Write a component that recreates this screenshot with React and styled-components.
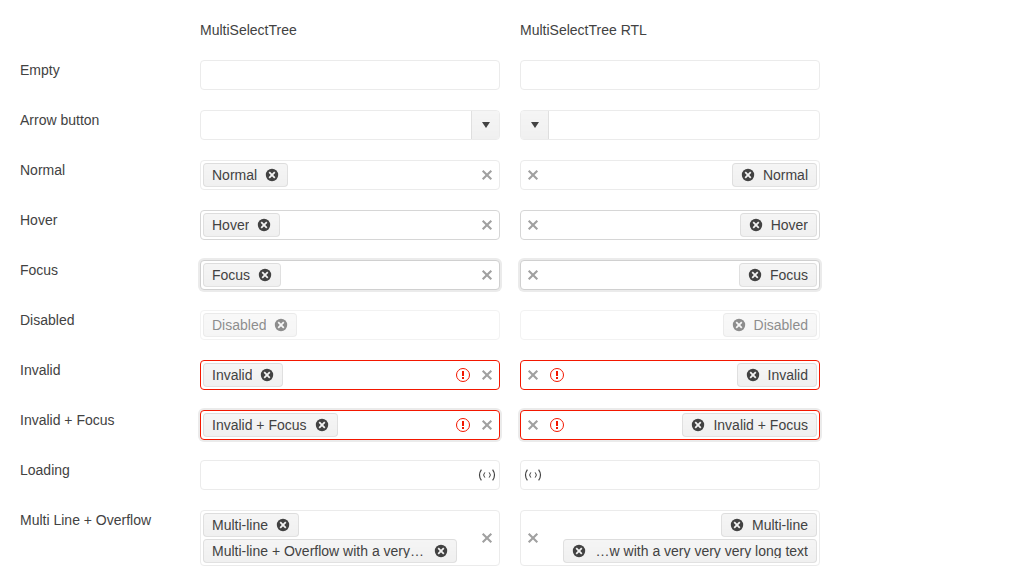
import React from "react";
import styled, { createGlobalStyle, css } from "styled-components";

const GlobalStyle = createGlobalStyle`
  * { box-sizing: border-box; }
  body {
    margin: 0;
    background: #fff;
    color: #424242;
    font: 14px/20px "Liberation Sans", Arial, sans-serif;
    overflow: hidden;
  }
`;

const Grid = styled.main`
  display: grid;
  grid-template-columns: 160px 300px 300px;
  gap: 20px;
  padding: 20px;
`;

const Label = styled.span`
  line-height: 20px;
`;

const states = {
  hover: css`border-color: #d6d6d6;`,
  focus: css`
    border-color: #d0d0d0;
    box-shadow: 0 0 0 2px #ebebeb;
  `,
  disabled: css`opacity: 0.6;`,
  invalid: css`border-color: #f31700;`,
  invalidFocus: css`
    border-color: #f31700;
    box-shadow: 0 0 0 2px #ebebeb;
  `,
};

const Field = styled.div`
  display: flex;
  align-items: stretch;
  width: 300px;
  min-height: 30px;
  border: 1px solid #ebebeb;
  border-radius: 4px;
  background: #fff;
  ${(p) => states[p.$state]}
`;

const Chips = styled.div`
  flex: 1;
  min-width: 0;
  display: flex;
  flex-direction: column;
  align-items: flex-start;
  gap: 2px;
  padding: 2px;
`;

const ChipBox = styled.span`
  display: flex;
  align-items: center;
  gap: 7px;
  height: 24px;
  max-width: 254px;
  padding-inline: 8px 7px;
  border: 1px solid rgba(0, 0, 0, 0.08);
  border-radius: 4px;
  background: #f5f5f5 linear-gradient(rgba(0, 0, 0, 0), rgba(0, 0, 0, 0.02));
`;

const ChipText = styled.span`
  min-width: 0;
  overflow: hidden;
  line-height: 14px;
  white-space: nowrap;
  text-overflow: ellipsis;
`;

const Icon = styled.svg`
  display: block;
  flex: none;
  width: 16px;
  height: 16px;
`;

const Actions = styled.div`
  display: flex;
  align-items: center;
  gap: 8px;
  padding-inline-end: 4px;
`;

const ArrowButton = styled.span`
  display: flex;
  align-items: center;
  justify-content: center;
  width: 28px;
  border-inline-start: 1px solid rgba(0, 0, 0, 0.08);
  border-start-end-radius: 3px;
  border-end-end-radius: 3px;
  background: #f5f5f5 linear-gradient(rgba(0, 0, 0, 0), rgba(0, 0, 0, 0.02));
`;

const RemoveIcon = () => (
  <Icon viewBox="0 0 16 16">
    <circle cx="8" cy="8" r="6.2" fill="#424242" />
    <path d="M5.2 5.2 10.8 10.8M10.8 5.2 5.2 10.8" stroke="#f3f3f3" strokeWidth="1.8" />
  </Icon>
);

const ClearIcon = () => (
  <Icon viewBox="0 0 16 16">
    <path d="M3.7 3.7 12.3 12.3M12.3 3.7 3.7 12.3" stroke="#a0a0a0" strokeWidth="2.1" />
  </Icon>
);

const WarningIcon = () => (
  <Icon viewBox="0 0 16 16" fill="#f31700">
    <circle cx="8" cy="8" r="6.5" fill="none" stroke="#f31700" />
    <path d="M7 4h2v5H7zM7 10h2v2H7z" />
  </Icon>
);

const LoadingIcon = () => (
  <Icon viewBox="0 0 16 16" fill="none" stroke="#424242" strokeWidth="1.15" overflow="visible">
    <path d="M2.4 2.6Q-1.4 8 2.4 13.4M13.6 2.6Q17.4 8 13.6 13.4" />
    <path d="M5.8 5.4Q3.4 8 5.8 10.6M10.2 5.4Q12.6 8 10.2 10.6" strokeWidth="1" />
  </Icon>
);

const CaretIcon = () => (
  <Icon viewBox="0 0 16 16">
    <path d="M4 5h8l-4 6z" fill="#424242" />
  </Icon>
);

const rows = [
  { label: "Empty" },
  { label: "Arrow button", arrow: true },
  { label: "Normal", chips: ["Normal"], clear: true },
  { label: "Hover", chips: ["Hover"], clear: true, state: "hover" },
  { label: "Focus", chips: ["Focus"], clear: true, state: "focus" },
  { label: "Disabled", chips: ["Disabled"], state: "disabled" },
  { label: "Invalid", chips: ["Invalid"], clear: true, warning: true, state: "invalid" },
  { label: "Invalid + Focus", chips: ["Invalid + Focus"], clear: true, warning: true, state: "invalidFocus" },
  { label: "Loading", loading: true },
  {
    label: "Multi Line + Overflow",
    chips: ["Multi-line", "Multi-line + Overflow with a very very very long text"],
    clear: true,
  },
];

const MultiSelectTree = ({ row, dir }) => (
  <Field dir={dir} $state={row.state}>
    <Chips>
      {row.chips?.map((text) => (
        <ChipBox key={text}>
          <ChipText>{text}</ChipText>
          <RemoveIcon />
        </ChipBox>
      ))}
    </Chips>
    {(row.clear || row.loading) && (
      <Actions>
        {row.warning && <WarningIcon />}
        {row.clear && <ClearIcon />}
        {row.loading && <LoadingIcon />}
      </Actions>
    )}
    {row.arrow && (
      <ArrowButton>
        <CaretIcon />
      </ArrowButton>
    )}
  </Field>
);

export default function App() {
  return (
    <>
      <GlobalStyle />
      <Grid>
        <span />
        <Label>MultiSelectTree</Label>
        <Label>MultiSelectTree RTL</Label>
        {rows.map((row) => (
          <React.Fragment key={row.label}>
            <Label>{row.label}</Label>
            <MultiSelectTree row={row} dir="ltr" />
            <MultiSelectTree row={row} dir="rtl" />
          </React.Fragment>
        ))}
      </Grid>
    </>
  );
}
